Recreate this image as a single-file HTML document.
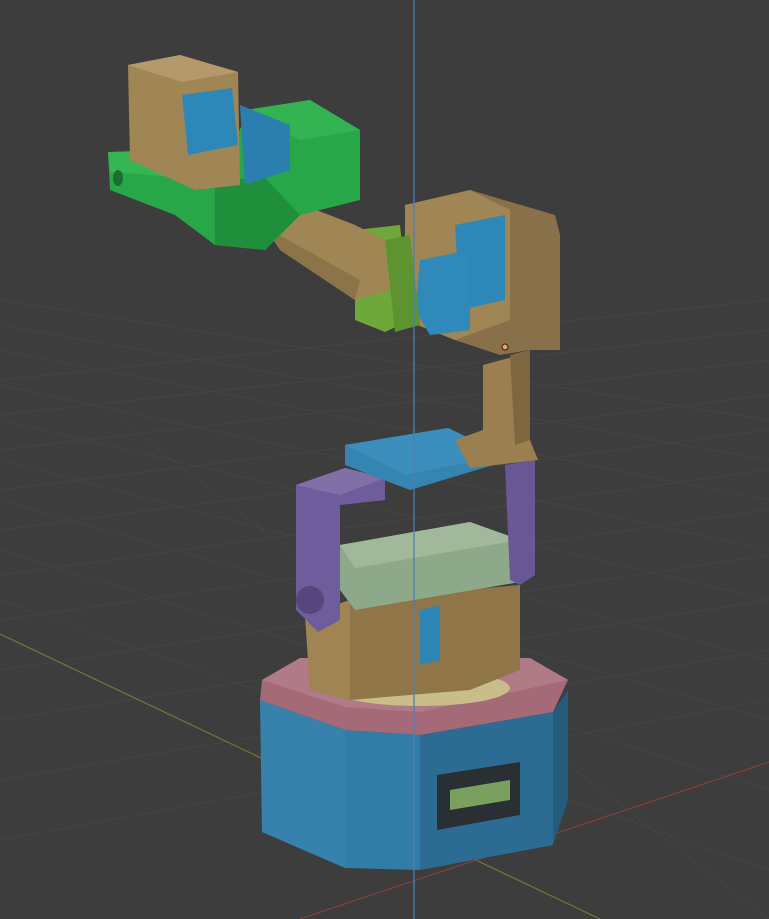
<!DOCTYPE html>
<html><head><meta charset="utf-8"><style>
html,body{margin:0;padding:0;background:#3d3d3d;width:769px;height:919px;overflow:hidden}
svg{display:block}
</style></head><body>
<svg width="769" height="919" viewBox="0 0 769 919" xmlns="http://www.w3.org/2000/svg">
<rect width="769" height="919" fill="#3d3d3d"/>
<g stroke="#444444" stroke-width="1" fill="none">
<path d="M0 380 L769 300 M0 450 L769 360 M0 530 L769 430 M0 620 L769 510 M0 720 L769 600 M0 840 L769 700 M0 415 L769 330 M0 490 L769 395 M0 575 L769 470 M0 670 L769 555 M0 780 L769 650"/>
<path d="M0 300 L769 420 M0 350 L769 500 M0 420 L769 600 M0 500 L769 720 M0 600 L769 870 M120 420 L769 919 M0 325 L769 460 M0 385 L769 550 M0 460 L769 660 M0 550 L769 790"/>
</g>
<line x1="0" y1="634" x2="600" y2="919" stroke="#6b7a3a" stroke-width="1.2"/>
<line x1="300" y1="919" x2="769" y2="762" stroke="#8a3e3e" stroke-width="1.2"/>
<!-- base -->
<polygon points="260,700 345,730 345,868 262,832" fill="#3682ad"/>
<polygon points="345,730 420,735 420,870 345,868" fill="#327da8"/>
<polygon points="420,735 553,712 553,845 420,870" fill="#2c6c93"/>
<polygon points="553,712 568,690 568,800 553,845" fill="#255c7c"/>
<polygon points="437,775 520,762 520,815 437,830" fill="#2a2f33"/>
<polygon points="450,790 510,780 510,800 450,810" fill="#7aa060"/>
<polygon points="262,680 300,658 530,658 568,680 553,712 420,735 345,730 260,700" fill="#a46a78"/>
<polygon points="262,680 300,658 530,658 568,680 420,712 345,707" fill="#b07a86"/>
<ellipse cx="420" cy="688" rx="90" ry="18" fill="#c9bd8a"/>
<!-- tan lower block -->
<polygon points="305,615 350,600 520,585 520,670 470,690 350,700 310,690" fill="#8f7548"/>
<polygon points="305,615 350,600 350,700 310,690" fill="#a08452"/>
<polygon points="420,610 440,605 440,660 420,665" fill="#2f86b6"/>
<!-- sage bar -->
<polygon points="340,545 470,522 520,540 520,582 355,610 340,590" fill="#8ea88a"/>
<polygon points="340,545 470,522 520,540 355,568" fill="#a2b89a"/>
<!-- purple frame -->
<polygon points="296,485 345,468 385,478 385,500 340,505 340,620 318,632 296,610" fill="#6e5c9c"/>
<polygon points="296,485 345,468 385,478 340,495" fill="#8070a8"/>
<polygon points="505,465 535,460 535,575 520,585 510,580" fill="#6a5896"/>
<circle cx="310" cy="600" r="14" fill="#55467d"/>
<!-- blue plate -->
<polygon points="345,445 448,428 510,460 410,490 345,465" fill="#3585b0"/>
<polygon points="345,445 448,428 505,455 405,475" fill="#3c8fbc"/>
<!-- column -->
<polygon points="483,365 520,355 530,440 538,460 470,468 455,440 483,430" fill="#9b7f50"/>
<polygon points="510,355 530,350 530,440 515,445" fill="#7e6640"/>
<!-- upper box -->
<polygon points="405,205 470,190 555,215 560,235 560,350 530,350 500,355 455,340 405,320" fill="#87704a"/>
<polygon points="405,205 470,190 510,210 510,320 455,340 405,320" fill="#a08654"/>
<polygon points="455,225 505,215 505,300 460,310" fill="#2d88b8"/>
<polygon points="420,260 470,250 470,330 430,335 415,310" fill="#2f8ab9"/>
<!-- green-yellow coupling -->
<polygon points="355,230 400,225 410,320 385,332 355,320" fill="#6ea83a"/>
<polygon points="385,240 410,235 420,325 395,332" fill="#5d9430"/>
<!-- arm -->
<polygon points="265,190 355,225 385,240 390,290 355,300 280,250 258,215" fill="#a08654"/>
<polygon points="280,250 355,300 360,280 270,230" fill="#8c7448"/>
<!-- green -->
<polygon points="108,152 230,148 250,110 310,100 360,130 360,200 300,215 265,250 215,245 175,215 110,190" fill="#28a748"/>
<polygon points="108,152 230,148 215,180 110,172" fill="#35b554"/>
<polygon points="245,110 310,100 360,130 300,140" fill="#33b352"/>
<polygon points="215,180 265,178 300,215 265,250 215,245" fill="#1f8f3c"/>
<ellipse cx="118" cy="178" rx="5" ry="8" fill="#1a6e30"/>
<!-- top-left tan box -->
<polygon points="128,65 180,55 238,72 240,185 195,190 130,160" fill="#a08654"/>
<polygon points="128,65 180,55 238,72 182,82" fill="#b4996a"/>
<polygon points="182,95 232,88 238,145 188,155" fill="#2d88b8"/>
<polygon points="240,105 290,125 290,170 245,185" fill="#2a7fae"/>
<!-- z axis -->
<line x1="414" y1="0" x2="414" y2="919" stroke="#4d7fb5" stroke-width="1.3"/>
<circle cx="505" cy="347" r="3" fill="#f0a050" stroke="#222" stroke-width="1"/>
</svg>
</body></html>
